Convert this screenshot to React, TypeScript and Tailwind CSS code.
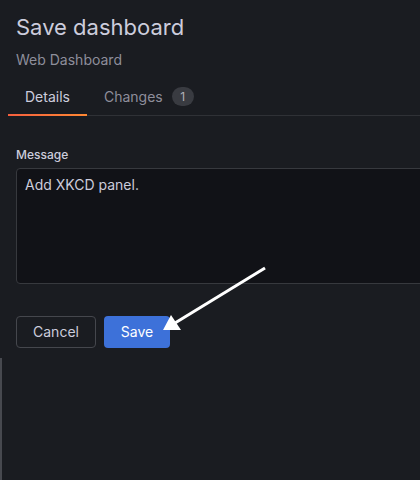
export default function App() {
  return (
    <div
      className="relative w-[420px] h-[480px] overflow-hidden bg-[#1a1c21] text-[#ccccdc]"
      style={{ fontFamily: "Inter, 'Noto Sans', sans-serif" }}
    >
      {/* Header */}
      <div className="pl-4 pt-[13px]">
        <h2 className="text-[22px] leading-[28px] font-normal text-[#ccccdc]">Save dashboard</h2>
        <div className="mt-[9px] text-sm leading-5 text-[#8e8e9b]">Web Dashboard</div>
      </div>

      {/* Tabs */}
      <div className="ml-2 mt-[8px] flex w-[500px] border-b border-[#2f3136]">
        <div className="relative flex h-[37px] items-center px-[17px] text-sm text-[#ccccdc]">
          Details
          <div className="absolute bottom-[-1px] left-0 right-0 h-[2px] bg-gradient-to-r from-[#f55f3e] to-[#ff8833]" />
        </div>
        <div className="flex h-[37px] items-center gap-[9px] pl-[17px] text-sm text-[#8e8e9b]">
          Changes
          <span className="flex h-[19px] w-[22px] items-center justify-center rounded-full bg-[#393b41] text-xs text-[#b0b1b8]">
            1
          </span>
        </div>
      </div>

      {/* Form */}
      <div className="pl-4 pt-[31px]">
        <label className="block text-xs font-medium leading-4 text-[#ccccdc]">Message</label>
        <div className="mt-[5px] h-[116px] w-[460px] rounded-sm border border-[#37393e] bg-[#111217] px-[8px] py-[5px] text-sm leading-[22px] text-[#ccccdc]">
          Add XKCD panel.
        </div>

        <div className="mt-[32px] flex gap-2">
          <button className="h-8 w-[80px] rounded-sm border border-[#45474d] text-sm text-[#ccccdc]">Cancel</button>
          <button className="h-8 w-[66px] rounded-sm bg-[#3d71d9] text-sm text-white">Save</button>
        </div>
      </div>

      {/* left edge of the panel behind */}
      <div className="mt-[10px] h-[200px] w-[2px] bg-[#47494f]" />

      {/* Annotation arrow */}
      <svg className="absolute left-0 top-0 pointer-events-none" width="420" height="480">
        <line x1="265" y1="268" x2="175" y2="323" stroke="white" strokeWidth="3" />
        <polygon points="163,330 171,315 181,330" fill="white" />
      </svg>
    </div>
  );
}
